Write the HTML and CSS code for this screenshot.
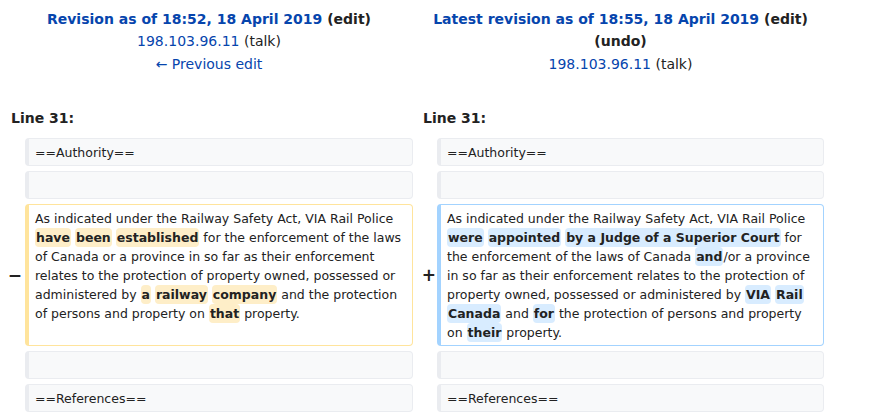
FILE: index.html
```html
<!DOCTYPE html>
<html lang="en">
<head>
<meta charset="utf-8">
<title>Difference between revisions</title>
<link rel="stylesheet" href="styles.css">
</head>
<body>
<div class="diff">
  <div class="title otitle">
    <div class="title-main"><a href="#">Revision as of 18:52, 18 April 2019</a> <span class="paren">(<a class="dark" href="#">edit</a>)</span></div>
    <div><a href="#">198.103.96.11</a> <span class="paren">(<a class="dark" href="#">talk</a>)</span></div>
    <div><a href="#">← Previous edit</a></div>
  </div>
  <div class="title ntitle">
    <div class="title-main"><a href="#">Latest revision as of 18:55, 18 April 2019</a> <span class="paren">(<a class="dark" href="#">edit</a>)</span><br><span class="paren">(<a class="dark" href="#">undo</a>)</span></div>
    <div><a href="#">198.103.96.11</a> <span class="paren">(<a class="dark" href="#">talk</a>)</span></div>
  </div>

  <div class="lineno">Line 31:</div>
  <div class="lineno">Line 31:</div>

  <div class="marker"></div>
  <div class="line ctx">==Authority==</div>
  <div class="marker"></div>
  <div class="line ctx">==Authority==</div>

  <div class="marker"></div>
  <div class="line ctx"></div>
  <div class="marker"></div>
  <div class="line ctx"></div>

  <div class="marker minus">−</div>
  <div class="line del">As indicated under the Railway Safety Act, VIA Rail Police <del>have</del> <del>been</del> <del>established</del> for the enforcement of the laws of Canada or a province in so far as their enforcement relates to the protection of property owned, possessed or administered by <del>a</del> <del>railway</del> <del>company</del> and the protection of persons and property on <del>that</del> property.</div>
  <div class="marker plus">+</div>
  <div class="line add">As indicated under the Railway Safety Act, VIA Rail Police <ins>were</ins> <ins>appointed</ins> <ins>by a Judge of a Superior Court</ins> for the enforcement of the laws of Canada <ins>and</ins>/or a province in so far as their enforcement relates to the protection of property owned, possessed or administered by <ins>VIA</ins> <ins>Rail</ins> <ins>Canada</ins> and <ins>for</ins> the protection of persons and property on <ins>their</ins> property.</div>

  <div class="marker"></div>
  <div class="line ctx"></div>
  <div class="marker"></div>
  <div class="line ctx"></div>

  <div class="marker"></div>
  <div class="line ctx">==References==</div>
  <div class="marker"></div>
  <div class="line ctx">==References==</div>
</div>
</body>
</html>
```
FILE: styles.css
```css
html, body {
  margin: 0;
  padding: 0;
  background: #ffffff;
}

body {
  font-family: "DejaVu Sans", sans-serif;
  color: #222222;
}

a {
  color: #0645ad;
  text-decoration: none;
}

a.dark {
  color: #222222;
}

.paren {
  color: #222222;
}

.diff {
  display: grid;
  grid-template-columns: 16px 388px 16px 387px;
  column-gap: 4px;
  row-gap: 5px;
  margin-left: 5px;
  padding-top: 8px;
}

.title {
  grid-column: span 2;
  text-align: center;
  font-size: 14px;
  line-height: 22.4px;
}

.title-main {
  font-weight: bold;
}

.lineno {
  grid-column: span 2;
  font-size: 14px;
  line-height: 22.4px;
  font-weight: bold;
  padding: 26.8px 0 3.6px 6px;
}

.marker {
  display: flex;
  align-items: center;
  justify-content: flex-end;
  font-size: 17px;
  font-weight: bold;
  line-height: 1;
}

.minus {
  margin-right: -1px;
}

.plus {
  margin-right: -3px;
}

.line {
  font-size: 12.5px;
  line-height: 19px;
  padding: 4px 6px 3px 6px;
  border: 1px solid #eaecf0;
  border-left-width: 4px;
  border-radius: 4px;
  min-height: 19px;
  white-space: pre-wrap;
  word-wrap: break-word;
}

.ctx {
  background: #f8f9fa;
}

.del {
  background: #ffffff;
  border-color: #ffe49c;
}

.add {
  background: #ffffff;
  border-color: #a3d3ff;
}

del, ins {
  text-decoration: none;
  font-weight: bold;
  border-radius: 4px;
  padding: 2px 1px;
}

del {
  background: #feeec8;
}

ins {
  background: #d8ecff;
}
```
